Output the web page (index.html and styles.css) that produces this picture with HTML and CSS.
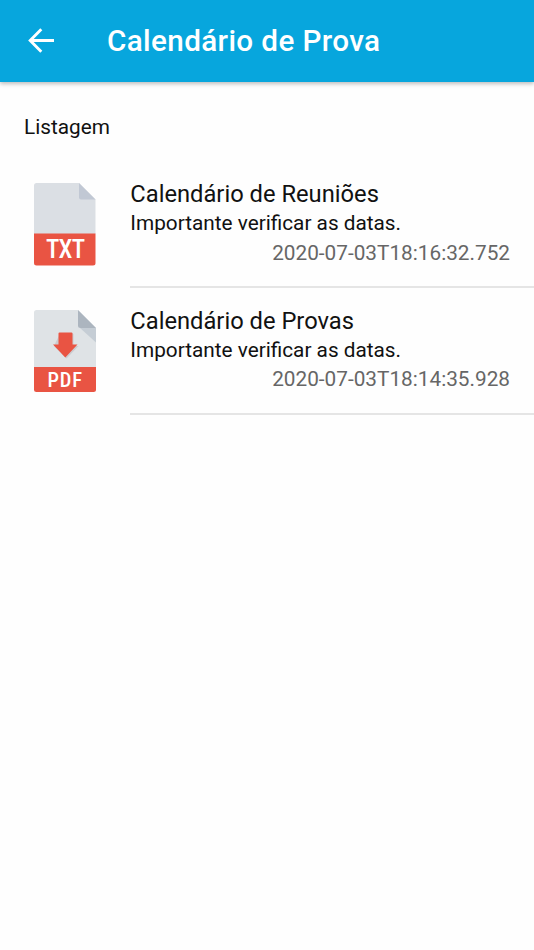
FILE: index.html
```
<!DOCTYPE html>
<html lang="pt-BR">
<head>
    <meta charset="UTF-8">
    <meta name="viewport" content="width=device-width, initial-scale=1.0">
    <title>Calendário de Prova</title>
    <link rel="stylesheet" href="styles.css">
</head>
<body>
    <header class="toolbar">
        <a class="back-button" href="#" aria-label="Voltar">
            <svg viewBox="0 0 26 25" width="26" height="25">
                <path d="M26 12.5H2.5M13.3 1.3L2.2 12.5L13.3 23.7" fill="none" stroke="#fff" stroke-width="2.9"/>
            </svg>
        </a>
        <h1 class="title">Calendário de Prova</h1>
    </header>

    <main>
        <p class="list-header">Listagem</p>

        <ul class="list">
            <li class="item">
                <svg class="file-icon" viewBox="0 0 62 83" width="62" height="83">
                    <path d="M2.5 0H45L61.5 16.5V51H0V2.5Q0 0 2.5 0Z" fill="#dbdfe4"/>
                    <path d="M45 0L61.5 16.5H47Q45 16.5 45 14.5Z" fill="#c1c8d4"/>
                    <path d="M0 50.5H61.5V80Q61.5 82.5 59 82.5H2.5Q0 82.5 0 80Z" fill="#e95443"/>
                    <text class="txt-label" x="12" y="75" textLength="39" lengthAdjust="spacing">TXT</text>
                </svg>
                <div class="item-content">
                    <h2>Calendário de Reuniões</h2>
                    <p>Importante verificar as datas.</p>
                    <p class="date">2020-07-03T18:16:32.752</p>
                </div>
            </li>
            <li class="item">
                <svg class="file-icon" viewBox="0 0 62 83" width="62" height="83">
                    <path d="M2.5 0H44L62 18V58H0V2.5Q0 0 2.5 0Z" fill="#dfe3e6"/>
                    <path d="M46 18H62V32.5Z" fill="#c5cdd5"/>
                    <path d="M44 0L62 18H46.5Q44 18 44 15.5Z" fill="#acb5bf"/>
                    <path d="M26 23.5H38.5Q39.5 23.5 39.5 24.5V36H44.5L32.5 48.5L20 36Z" fill="#b9b5b9" opacity=".5"/>
                    <path d="M25.5 22.5H37.5Q38.5 22.5 38.5 23.5V34.5H43.5L31.3 47.5L19 34.5H24.5V23.5Q24.5 22.5 25.5 22.5Z" fill="#e95443"/>
                    <path d="M0 57H62V79.5Q62 82 59.5 82H2.5Q0 82 0 79.5Z" fill="#e95443"/>
                    <text class="pdf-label" x="13.5" y="76.7" textLength="34.5" lengthAdjust="spacing">PDF</text>
                </svg>
                <div class="item-content">
                    <h2>Calendário de Provas</h2>
                    <p>Importante verificar as datas.</p>
                    <p class="date">2020-07-03T18:14:35.928</p>
                </div>
            </li>
        </ul>
    </main>
</body>
</html>
```
FILE: styles.css
```
body {
    margin: 0;
    background-color: #fefefe;
    color: #111;
    font-family: Roboto, sans-serif;
}
h1, h2, p, ul {
    margin: 0;
    padding: 0;
    font-weight: normal;
}
.toolbar {
    display: flex;
    align-items: center;
    height: 82px;
    box-sizing: border-box;
    padding: 0 0 1px 28px;
    background-color: #07a6dd;
    box-shadow: 0 2px 4px rgba(0,0,0,0.25);
}
.back-button {
    display: flex;
    width: 79px;
}
.title {
    padding-bottom: 1px;
    color: white;
    font-size: 29.67px;
    font-weight: 500;
    letter-spacing: 0.37px;
}
.list-header {
    padding: 33px 24px 0;
    font-size: 20.77px;
    line-height: 25px;
}
.list {
    padding-top: 27px;
    list-style: none;
}
.item {
    display: flex;
    height: 126.7px;
    padding-left: 34.3px;
}
.file-icon {
    flex: none;
    margin-top: 16px;
}
.item-content {
    flex: 1;
    margin-left: 34px;
    padding: 13px 24px 0 0;
    height: 121px;
    box-sizing: border-box;
    border-bottom: 2px solid #e5e5e5;
}
.item-content h2 {
    font-size: 23.73px;
    line-height: 29px;
}
.item-content p {
    font-size: 20.77px;
    line-height: 29.8px;
}
.item-content .date {
    color: #666;
    text-align: right;
}
.txt-label, .pdf-label {
    fill: #fff;
    font-size: 25px;
    font-weight: 500;
    font-stretch: condensed;
}
.pdf-label {
    font-size: 20.5px;
}
```
